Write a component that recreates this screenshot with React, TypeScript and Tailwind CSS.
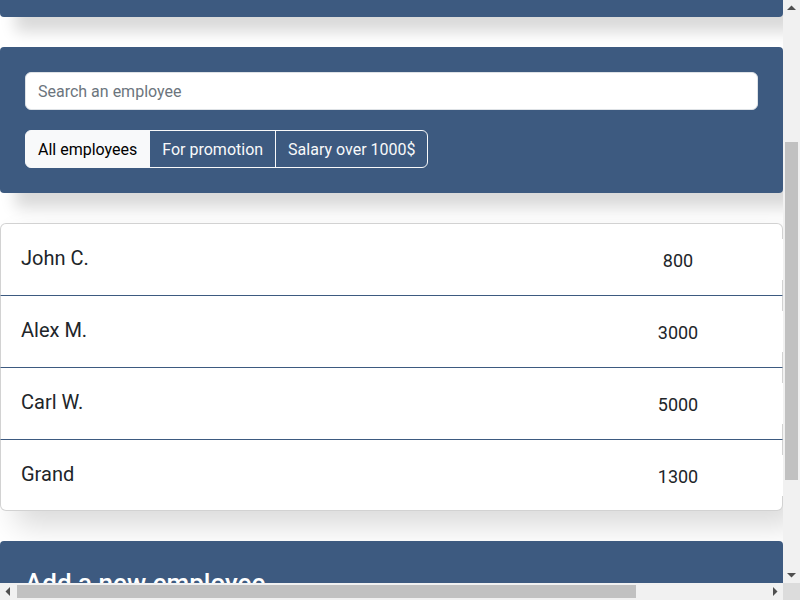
import { useLayoutEffect, useRef } from "react";
import { Cookie, Trash, Star } from "lucide-react";

type Employee = {
  name: string;
  salary: number;
};

const employees: Employee[] = [
  { name: "John C.", salary: 800 },
  { name: "Alex M.", salary: 3000 },
  { name: "Carl W.", salary: 5000 },
  { name: "Grand", salary: 1300 },
];

const font = { fontFamily: 'Roboto, "Noto Sans", sans-serif' };

function AppInfo() {
  return (
    <div className="mt-[30px] rounded bg-[#3d5a80] p-[25px] text-white shadow-[15px_15px_15px_rgba(0,0,0,0.15)]">
      <h1 className="mb-2 text-[40px] leading-[48px] font-medium">Employee accounting in company N</h1>
      <h2 className="mb-2 text-[32px] leading-[40px] font-medium">Total number of employees: 4</h2>
      <h2 className="mb-2 text-[32px] leading-[40px] font-medium">Will receive a bonus: 0</h2>
    </div>
  );
}

function SearchPanel() {
  const filters = ["All employees", "For promotion", "Salary over 1000$"];
  return (
    <div className="mt-[30px] rounded bg-[#3d5a80] p-[25px] shadow-[15px_15px_15px_rgba(0,0,0,0.15)]">
      <input
        type="text"
        placeholder="Search an employee"
        className="mb-5 block w-full rounded-md border border-[#dee2e6] bg-white px-3 pt-[7px] pb-[5px] text-base leading-6 text-[#212529] outline-none placeholder:text-[#6c757d]"
      />
      <div className="flex">
        {filters.map((label, i) => (
          <button
            key={label}
            type="button"
            className={
              "border border-[#f8f9fa] px-3 pt-[7px] pb-[5px] text-base leading-6 " +
              (i === 0 ? "rounded-l-md bg-[#f8f9fa] text-black " : "-ml-px text-[#f8f9fa] ") +
              (i === filters.length - 1 ? "rounded-r-md" : "")
            }
          >
            {label}
          </button>
        ))}
      </div>
    </div>
  );
}

function EmployeesList() {
  return (
    <ul className="mt-[30px] rounded-md bg-white shadow-[15px_15px_30px_rgba(0,0,0,0.15)]">
      {employees.map((emp, i) => {
        const last = i === employees.length - 1;
        return (
          <li
            key={emp.name}
            className={
              "flex justify-between border-x border-[rgba(0,0,0,0.175)] px-5 pt-[15px] " +
              (i === 0 ? "rounded-t-md border-t " : "") +
              (last
                ? "rounded-b-md border-b border-b-[rgba(0,0,0,0.175)] pb-[14px]"
                : "border-b border-b-[#3d5a80] pb-[15px]")
            }
          >
            <span className="min-w-[550px] pt-[2px] text-[20px] leading-[35px] text-[#212529]">{emp.name}</span>
            <input
              type="text"
              readOnly
              value={emp.salary}
              className="w-[214px] shrink-0 bg-white pt-[2px] text-center text-[18px] leading-[35px] text-[#212529] outline-none"
            />
            <div className="flex w-[141px] shrink-0 items-center justify-center">
              <button type="button" className="m-[3px] flex h-[35px] w-[35px] items-center justify-center text-[#e09f3e]">
                <Cookie size={17} />
              </button>
              <button type="button" className="m-[3px] flex h-[35px] w-[35px] items-center justify-center text-[#e5383b]">
                <Trash size={17} />
              </button>
              <Star size={15} className="ml-2 text-[#ffd700] opacity-0" />
            </div>
          </li>
        );
      })}
    </ul>
  );
}

function AddForm() {
  return (
    <div className="mt-[30px] rounded bg-[#3d5a80] p-[25px] text-white shadow-[15px_15px_15px_rgba(0,0,0,0.15)]">
      <h3 className="mb-2 text-[26px] leading-[34px] font-medium">Add a new employee</h3>
      <form className="flex gap-2">
        <input
          type="text"
          placeholder="What's his name?"
          className="w-full rounded-md border border-[#dee2e6] bg-white px-3 py-1.5 text-base leading-6 text-[#212529] placeholder:text-[#6c757d]"
        />
        <input
          type="number"
          placeholder="Salary in $?"
          className="w-full rounded-md border border-[#dee2e6] bg-white px-3 py-1.5 text-base leading-6 text-[#212529] placeholder:text-[#6c757d]"
        />
        <button type="button" className="rounded-md border border-[#f8f9fa] px-3 py-1.5 text-base leading-6 text-[#f8f9fa]">
          Add
        </button>
      </form>
    </div>
  );
}

function Arrow({ dir }: { dir: "up" | "down" | "left" | "right" }) {
  const points = {
    up: "4,10 8.5,5.5 13,10",
    down: "4,7 8.5,11.5 13,7",
    left: "10,4 5.5,8.5 10,13",
    right: "7,4 11.5,8.5 7,13",
  }[dir];
  return (
    <svg width="17" height="17" viewBox="0 0 17 17" className="shrink-0">
      <polygon points={points} fill="#505050" />
    </svg>
  );
}

export default function App() {
  const scroller = useRef<HTMLDivElement>(null);

  useLayoutEffect(() => {
    if (scroller.current) {
      scroller.current.scrollTop = 215;
      scroller.current.scrollLeft = 0;
    }
  }, []);

  return (
    <div className="grid h-[600px] w-[800px] grid-cols-[783px_17px] grid-rows-[583px_17px] bg-white" style={font}>
      <div ref={scroller} className="overflow-hidden">
        <div className="mx-auto max-w-[1000px] pb-[60px]">
          <AppInfo />
          <SearchPanel />
          <EmployeesList />
          <AddForm />
        </div>
      </div>

      {/* vertical scrollbar */}
      <div className="flex flex-col bg-[#f1f1f1]">
        <Arrow dir="up" />
        <div className="flex-1 pt-[125px]">
          <div className="ml-[2px] h-[338px] w-[13px] bg-[#c1c1c1]" />
        </div>
        <Arrow dir="down" />
      </div>

      {/* horizontal scrollbar */}
      <div className="flex bg-[#f1f1f1]">
        <Arrow dir="left" />
        <div className="flex-1 py-[2px]">
          <div className="h-[13px] w-[619px] bg-[#c1c1c1]" />
        </div>
        <Arrow dir="right" />
      </div>

      <div className="bg-[#dcdcdc]" />
    </div>
  );
}
